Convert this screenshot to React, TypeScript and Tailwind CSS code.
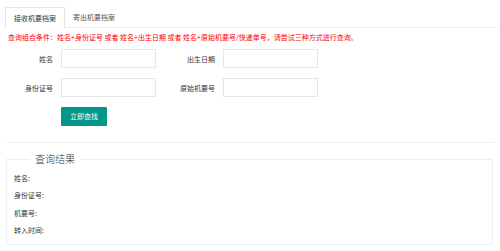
import React from "react";

const font = { fontFamily: '"Noto Sans CJK SC", "Noto Sans", sans-serif' };

function Field({ label, gapLeft }: { label: string; gapLeft?: boolean }) {
  return (
    <div className={`flex items-center ${gapLeft ? "ml-[6px]" : ""}`}>
      <label className="w-[53px] text-right text-[7px] leading-[10px] text-[#333]">{label}</label>
      <input
        type="text"
        className="ml-[8px] w-[95px] h-[19px] border border-[#e6e6e6] bg-white outline-none"
      />
    </div>
  );
}

export default function App() {
  const results = ["姓名:", "身份证号:", "机要号:", "转入时间:"];

  return (
    <div className="w-[500px] h-[251px] bg-white overflow-hidden" style={font}>
      {/* Tabs */}
      <div className="pt-[7px] pl-[5px] pr-[3px]">
        <div className="flex h-[21px] border-b border-[#eee]">
          <div className="-mb-px h-[21px] px-[8px] flex items-center border border-b-0 border-[#e6e6e6] bg-white text-[7px] text-[#333]">
            接收机要档案
          </div>
          <div className="h-[20px] px-[8px] flex items-center text-[7px] text-[#555]">寄出机要档案</div>
        </div>
      </div>

      {/* Hint */}
      <p className="mt-[4px] pl-[8px] text-[7px] leading-[10px] text-[#ff0000]">
        查询组合条件：姓名+身份证号 或者 姓名+出生日期 或者 姓名+原始机要号/快递单号，请尝试三种方式进行查询。
      </p>

      {/* Form */}
      <div className="mt-[7px] flex flex-col gap-[10px]">
        <div className="flex">
          <Field label="姓名" />
          <Field label="出生日期" gapLeft />
        </div>
        <div className="flex">
          <Field label="身份证号" />
          <Field label="原始机要号" gapLeft />
        </div>
        <div className="flex pl-[61px]">
          <button className="w-[46px] h-[19px] rounded-[1px] bg-[#009688] text-white text-[7px] leading-[19px]">
            立即查找
          </button>
        </div>
      </div>

      {/* Divider */}
      <div className="mt-[16px] ml-[6px] w-[489px] h-px bg-[#eee]" />

      {/* Result */}
      <fieldset className="mt-[9px] ml-[6px] w-[487px] border border-[#eee] px-[7px] pb-[5px] pt-[3px]">
        <legend className="ml-[16px] px-[5px] text-[10px] leading-[14px] font-light text-[#333]">查询结果</legend>
        {results.map((r) => (
          <div key={r} className="h-[17.5px] flex items-center text-[7px] text-[#333]">
            {r}
          </div>
        ))}
      </fieldset>
    </div>
  );
}
